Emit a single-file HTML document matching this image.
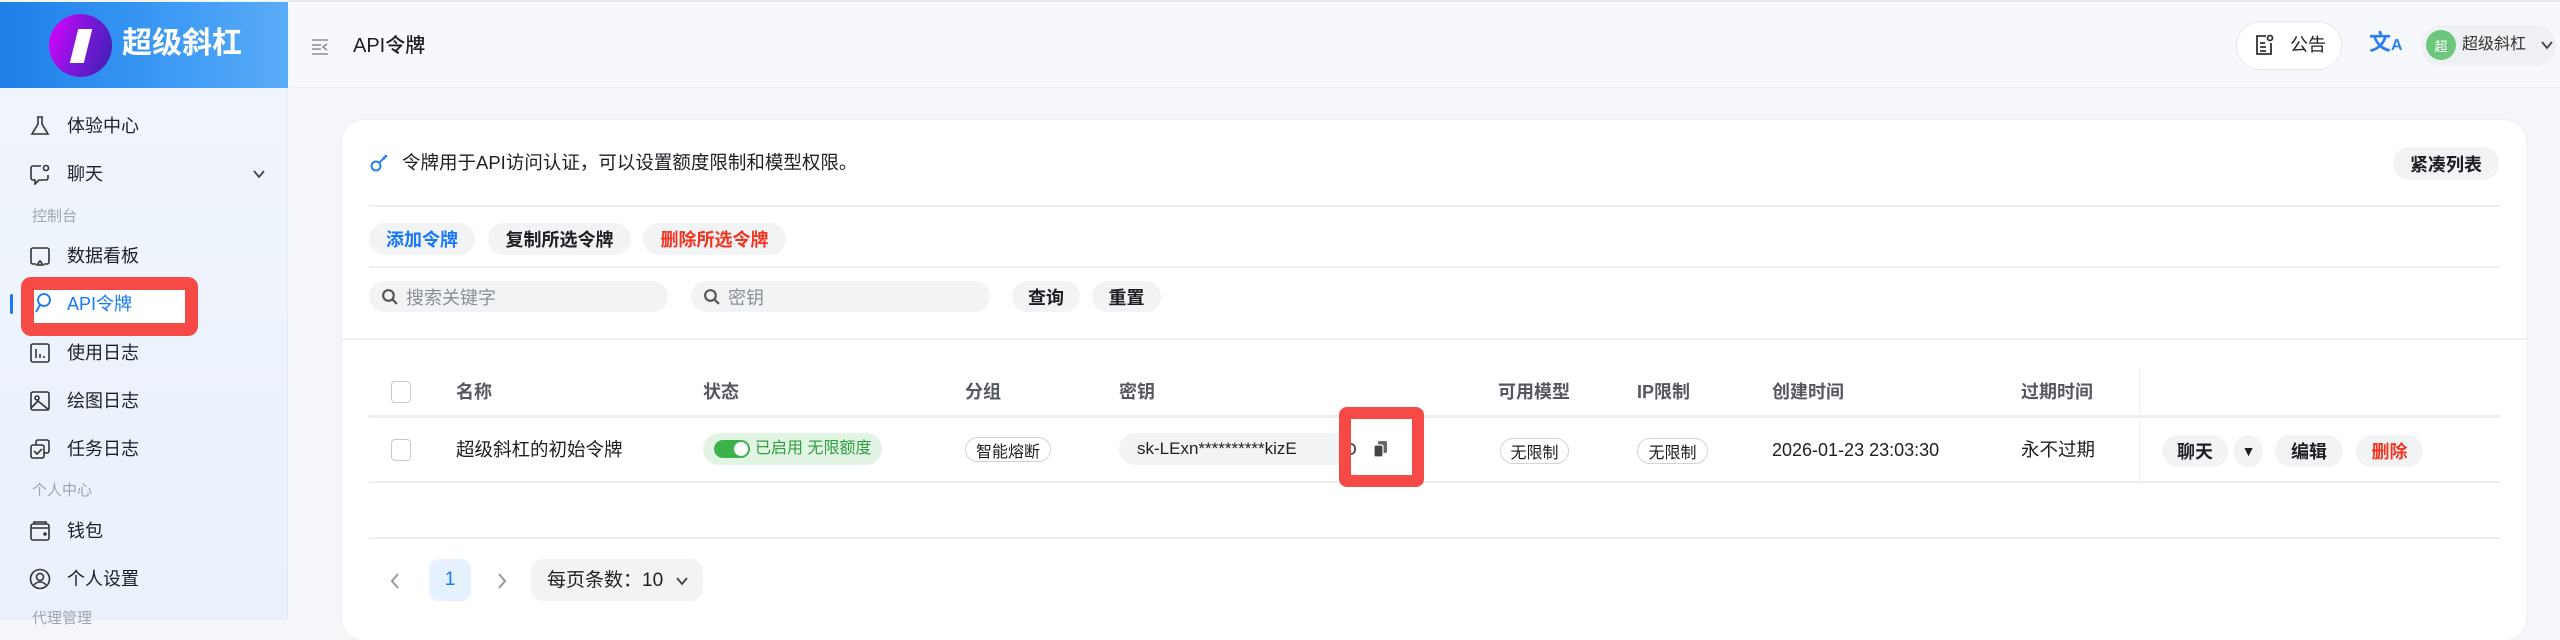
<!DOCTYPE html>
<html><head><meta charset="utf-8">
<style>
*{margin:0;padding:0;box-sizing:border-box}
body{width:2560px;height:620px;overflow:hidden;background:#f4f6fa;font-family:"Liberation Sans","Noto Sans CJK SC",sans-serif;color:#1c1f23;position:relative}
.a{position:absolute}
.t{position:absolute;white-space:nowrap;line-height:1}
.side{left:0;top:0;width:288px;height:620px;background:linear-gradient(180deg,#f1f5fd,#eaf1fb);border-right:1px solid #e6ebf3}
.logo{left:0;top:2px;width:288px;height:86px;background:linear-gradient(90deg,#1f7fe8,#3d9af5 60%,#5aacf7)}
.nav{font-size:18px;color:#1c1f23}
.grp{font-size:15px;color:#a0a6b0}
.ico{position:absolute;left:29px;width:22px;height:22px}
.btn{position:absolute;border-radius:16px;background:#f2f3f5;font-size:18px;font-weight:bold;display:flex;align-items:center;justify-content:center}
.line{position:absolute;height:2px;background:#eceef1}
.th{font-size:18px;color:#55595f;font-weight:bold;top:383px}
.tag{position:absolute;border:1px solid #d0d3d8;border-radius:14px;background:#fff;font-size:16px;display:flex;align-items:center;justify-content:center}
.cb{position:absolute;width:20px;height:22px;border:1.5px solid #c6cad1;border-radius:4px;background:#fff}
</style></head><body>
<div class="a" style="left:0;top:0;width:2560px;height:2px;background:#e8e8ea"></div>
<div class="a side"></div>
<div class="a logo"></div>
<div class="a" style="left:49px;top:14px;width:63px;height:63px;border-radius:50%;background:linear-gradient(110deg,#e200ff,#7a18d9 50%,#3b1fb0)"></div>
<div class="a" style="left:74px;top:29px;width:14px;height:34px;background:#fff;transform:skewX(-14deg)"></div>
<div class="t" style="left:122px;top:29px;font-size:30px;font-weight:bold;color:#fff">超级斜杠</div>
<!-- header -->
<div class="a" style="left:289px;top:2px;width:2271px;height:86px;background:#f6f8fc;border-bottom:1px solid #eceff4"></div>
<svg class="a" style="left:310px;top:37px" width="20" height="20" viewBox="0 0 20 20" fill="none" stroke="#8a8f98" stroke-width="1.6"><path d="M2 3h16M2 8h9M2 12h9M2 17h16M17 7l-4 3 4 3"/></svg>
<div class="t" style="left:353px;top:36px;font-size:20px;font-weight:500">API令牌</div>
<div class="a" style="left:2236px;top:21px;width:106px;height:49px;border:1px solid #e6e8ec;border-radius:25px;background:#fff"></div>
<svg class="a" style="left:2252px;top:33px" width="24" height="24" viewBox="0 0 24 24" fill="none" stroke="#333" stroke-width="1.8"><path d="M14 3H5v18h14V10M8 10h5M8 14h6M8 18h6"/><circle cx="18" cy="5" r="2.5"/></svg>
<div class="t" style="left:2290px;top:36px;font-size:18px">公告</div>
<div class="t" style="left:2369px;top:32px;font-size:22px;color:#2d7ff0;font-weight:bold">文<span style="font-size:16px">A</span></div>
<div class="a" style="left:2421px;top:25px;width:135px;height:41px;border-radius:21px;background:#eef0f3"></div>
<div class="a" style="left:2426px;top:30px;width:30px;height:30px;border-radius:50%;background:#6cc77c;color:#fff;font-size:13px;display:flex;align-items:center;justify-content:center">超</div>
<div class="t" style="left:2462px;top:37px;font-size:16px;color:#333">超级斜杠</div>
<svg class="a" style="left:2540px;top:38px" width="14" height="14" viewBox="0 0 14 14" fill="none" stroke="#444" stroke-width="1.8"><path d="M2 4l5 6 5-6"/></svg>
<!-- sidebar nav -->
<svg class="ico" style="top:115px" viewBox="0 0 22 22" fill="none" stroke="#333" stroke-width="1.6"><path d="M8 2h6M9 2v7L3 19h16L13 9V2"/></svg>
<div class="t nav" style="left:67px;top:117px">体验中心</div>
<svg class="ico" style="top:163px" viewBox="0 0 22 22" fill="none" stroke="#333" stroke-width="1.6"><path d="M12 3H4a2 2 0 0 0-2 2v10a2 2 0 0 0 2 2h2v4l4-4h7a2 2 0 0 0 2-2v-3"/><circle cx="17" cy="5" r="2.5"/></svg>
<div class="t nav" style="left:67px;top:165px">聊天</div>
<svg class="a" style="left:252px;top:167px" width="14" height="14" viewBox="0 0 14 14" fill="none" stroke="#444" stroke-width="1.8"><path d="M2 4l5 6 5-6"/></svg>
<div class="t grp" style="left:32px;top:209px">控制台</div>
<svg class="ico" style="top:245px" viewBox="0 0 22 22" fill="none" stroke="#333" stroke-width="1.6"><path d="M7 19H4a2 2 0 0 1-2-2V5a2 2 0 0 1 2-2h14a2 2 0 0 1 2 2v12a2 2 0 0 1-2 2h-3M8 20l3-4 3 4z"/></svg>
<div class="t nav" style="left:67px;top:247px">数据看板</div>
<div class="a" style="left:10px;top:294px;width:3px;height:20px;background:#1677ff;border-radius:2px"></div>
<div class="a" style="left:21px;top:277px;width:177px;height:59px;border:13px solid #f54a45;border-radius:10px;background:#fff"></div>
<svg class="ico" style="left:34px;top:292px;width:18px;height:22px" viewBox="0 0 18 22" fill="none" stroke="#1677ff" stroke-width="1.8"><circle cx="10" cy="8" r="6"/><path d="M6 13L2 20"/></svg>
<div class="t nav" style="left:67px;top:295px;color:#1677ff">API令牌</div>
<svg class="ico" style="top:342px" viewBox="0 0 22 22" fill="none" stroke="#333" stroke-width="1.6"><rect x="2" y="2" width="18" height="18" rx="2"/><path d="M7 7v9M11 12v4M15 14v2"/></svg>
<div class="t nav" style="left:67px;top:344px">使用日志</div>
<svg class="ico" style="top:390px" viewBox="0 0 22 22" fill="none" stroke="#333" stroke-width="1.6"><rect x="2" y="2" width="18" height="18" rx="2"/><circle cx="8" cy="8" r="2"/><path d="M2 18l7-7 11 9"/></svg>
<div class="t nav" style="left:67px;top:392px">绘图日志</div>
<svg class="ico" style="top:438px" viewBox="0 0 22 22" fill="none" stroke="#333" stroke-width="1.6"><rect x="7" y="2" width="13" height="13" rx="2"/><rect x="2" y="7" width="13" height="13" rx="2" fill="#eef3fb"/><path d="M5 13l3 3 5-5"/></svg>
<div class="t nav" style="left:67px;top:440px">任务日志</div>
<div class="t grp" style="left:32px;top:483px">个人中心</div>
<svg class="ico" style="top:520px" viewBox="0 0 22 22" fill="none" stroke="#333" stroke-width="1.6"><rect x="2" y="4" width="18" height="16" rx="2"/><path d="M2 8h18M5 4V2h12v2"/><circle cx="16" cy="14" r="1" fill="#333"/></svg>
<div class="t nav" style="left:67px;top:522px">钱包</div>
<svg class="ico" style="top:568px" viewBox="0 0 22 22" fill="none" stroke="#333" stroke-width="1.6"><circle cx="11" cy="11" r="9.5"/><circle cx="11" cy="9" r="3.5"/><path d="M5 17c3-4 9-4 12 0"/></svg>
<div class="t nav" style="left:67px;top:570px">个人设置</div>
<div class="t grp" style="left:32px;top:611px">代理管理</div>
<!-- card -->
<div class="a" style="left:342px;top:120px;width:2184px;height:520px;background:#fff;border-radius:22px;box-shadow:0 0 3px rgba(0,0,0,.06)"></div>
<svg class="a" style="left:369px;top:153px" width="20" height="20" viewBox="0 0 20 20" fill="none" stroke="#1677ff" stroke-width="1.8"><circle cx="7" cy="13" r="4.5"/><path d="M10 10l7-7M14 4l2 2M16 2l2 2"/></svg>
<div class="t" style="left:402px;top:154px;font-size:18.5px">令牌用于API访问认证，可以设置额度限制和模型权限。</div>
<div class="btn" style="left:2393px;top:147px;width:106px;height:33px">紧凑列表</div>
<div class="line" style="left:369px;top:205px;width:2131px"></div>
<div class="btn" style="left:369px;top:223px;width:106px;height:32px;color:#1677ff">添加令牌</div>
<div class="btn" style="left:488px;top:223px;width:143px;height:32px">复制所选令牌</div>
<div class="btn" style="left:643px;top:223px;width:143px;height:32px;color:#f5331f">删除所选令牌</div>
<div class="line" style="left:369px;top:266px;width:2131px"></div>
<div class="btn" style="left:369px;top:281px;width:299px;height:31px;justify-content:flex-start;font-weight:normal;color:#8a8f98"><svg style="margin:0 8px 0 12px" width="17" height="17" viewBox="0 0 16 16" fill="none" stroke="#555" stroke-width="2"><circle cx="7" cy="7" r="5"/><path d="M11 11l4 4"/></svg>搜索关键字</div>
<div class="btn" style="left:691px;top:281px;width:299px;height:31px;justify-content:flex-start;font-weight:normal;color:#8a8f98"><svg style="margin:0 8px 0 12px" width="17" height="17" viewBox="0 0 16 16" fill="none" stroke="#555" stroke-width="2"><circle cx="7" cy="7" r="5"/><path d="M11 11l4 4"/></svg>密钥</div>
<div class="btn" style="left:1012px;top:281px;width:68px;height:31px">查询</div>
<div class="btn" style="left:1092px;top:281px;width:69px;height:31px">重置</div>
<div class="line" style="left:342px;top:338px;width:2184px"></div>
<!-- table -->
<div class="cb" style="left:391px;top:381px"></div>
<div class="t th" style="left:456px">名称</div>
<div class="t th" style="left:703px">状态</div>
<div class="t th" style="left:965px">分组</div>
<div class="t th" style="left:1119px">密钥</div>
<div class="t th" style="left:1498px">可用模型</div>
<div class="t th" style="left:1637px">IP限制</div>
<div class="t th" style="left:1772px">创建时间</div>
<div class="t th" style="left:2021px">过期时间</div>
<div class="a" style="left:2139px;top:368px;width:1px;height:116px;background:#eceef1"></div>
<div class="a" style="left:369px;top:415px;width:2131px;height:3px;background:#eceef1"></div>
<div class="cb" style="left:391px;top:439px"></div>
<div class="t" style="left:456px;top:441px;font-size:18.5px">超级斜杠的初始令牌</div>
<div class="a" style="left:703px;top:433px;width:179px;height:32px;border-radius:16px;background:#e2f5e5"></div>
<div class="a" style="left:714px;top:440px;width:36px;height:18px;border-radius:9px;background:#3cb34a"></div>
<div class="a" style="left:734px;top:442px;width:14px;height:14px;border-radius:50%;background:#fff"></div>
<div class="t" style="left:755px;top:441px;font-size:16px;color:#2f9e3e">已启用 无限额度</div>
<div class="tag" style="left:965px;top:437px;width:86px;height:25px">智能熔断</div>
<div class="a" style="left:1119px;top:433px;width:277px;height:32px;border-radius:16px;background:#f2f3f5"></div>
<div class="t" style="left:1137px;top:440px;font-size:17px">sk-LExn**********kizE</div>
<div class="line" style="left:369px;top:481px;width:2131px"></div>
<div class="a" style="left:1339px;top:407px;width:85px;height:80px;border:12px solid #f54a45;border-radius:8px;background:#fff"></div>
<div class="a" style="left:1351px;top:443px;width:5px;height:12px;border-radius:0 6px 6px 0;border:2px solid #555;border-left:none"></div>
<svg class="a" style="left:1373px;top:440px" width="16" height="18" viewBox="0 0 16 18"><rect x="5" y="1" width="9" height="12" rx="1.5" fill="#666"/><rect x="1" y="5" width="9" height="12" rx="1.5" fill="#444" stroke="#fff" stroke-width="1.2"/></svg>
<div class="tag" style="left:1500px;top:438px;width:69px;height:26px">无限制</div>
<div class="tag" style="left:1637px;top:438px;width:71px;height:26px">无限制</div>
<div class="t" style="left:1772px;top:441px;font-size:18px">2026-01-23 23:03:30</div>
<div class="t" style="left:2021px;top:441px;font-size:18.5px">永不过期</div>
<div class="btn" style="left:2162px;top:435px;width:66px;height:32px">聊天</div>
<div class="btn" style="left:2234px;top:435px;width:29px;height:32px;font-size:14px">▼</div>
<div class="btn" style="left:2275px;top:435px;width:68px;height:32px">编辑</div>
<div class="btn" style="left:2356px;top:435px;width:67px;height:32px;color:#f5331f">删除</div>
<div class="line" style="left:369px;top:537px;width:2131px"></div>
<!-- pagination -->
<svg class="a" style="left:389px;top:572px" width="12" height="18" viewBox="0 0 12 18" fill="none" stroke="#999" stroke-width="2"><path d="M9 2L3 9l6 7"/></svg>
<div class="a" style="left:429px;top:559px;width:42px;height:42px;border-radius:10px;background:#e6f1ff;color:#1677ff;font-size:19px;display:flex;align-items:center;justify-content:center">1</div>
<svg class="a" style="left:496px;top:572px" width="12" height="18" viewBox="0 0 12 18" fill="none" stroke="#999" stroke-width="2"><path d="M3 2l6 7-6 7"/></svg>
<div class="a" style="left:531px;top:559px;width:172px;height:42px;border-radius:12px;background:#f2f3f5"></div>
<div class="t" style="left:547px;top:571px;font-size:19px">每页条数：10</div>
<svg class="a" style="left:675px;top:574px" width="14" height="14" viewBox="0 0 14 14" fill="none" stroke="#444" stroke-width="1.8"><path d="M2 4l5 6 5-6"/></svg>
</body></html>
